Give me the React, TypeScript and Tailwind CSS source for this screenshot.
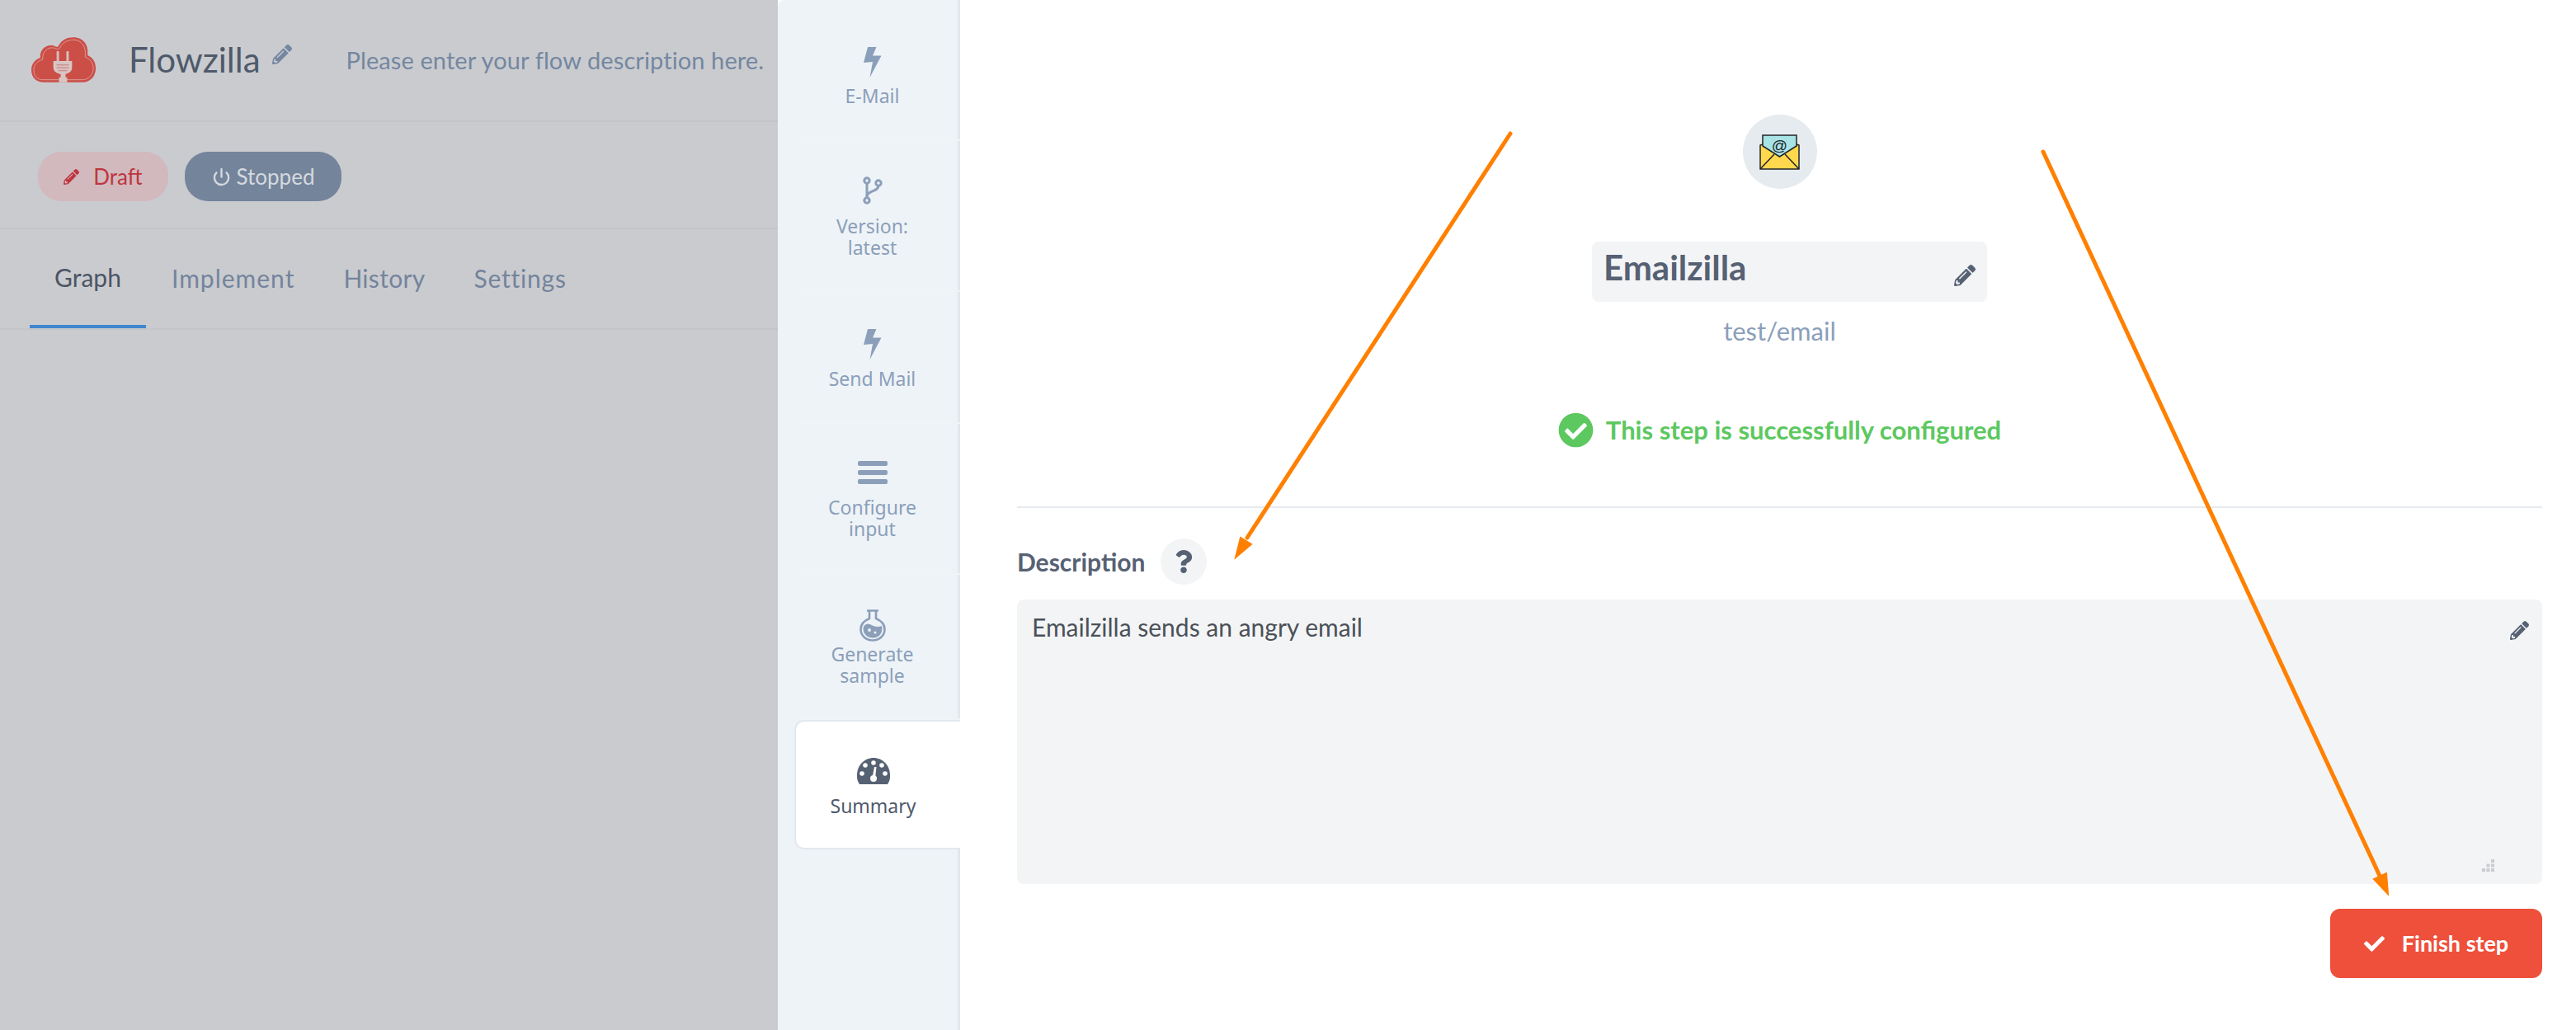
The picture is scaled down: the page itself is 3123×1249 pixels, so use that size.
import React from 'react'
import { FaPencilAlt, FaCheckCircle, FaCheck, FaQuestion } from 'react-icons/fa'
import { Power } from 'lucide-react'

function Logo() {
  return (
    <svg viewBox="0 0 80 56" className="w-[79px] h-[56px]">
      <path
        d="M14 55C5 55 0 48 0 40C0 32 5 27 11 25C10 15 18 8 27 10C31 12 32 12 33 11C37 3 44 0 52 0C63 0 71 9 69 22C76 25 79 31 79 38C79 48 72 55 63 55Z"
        fill="#cb4e47"
      />
      <path
        d="M14 52C7 52 3 47 3 40C3 33 8 29 14 27C13 18 20 11 28 13C32 15 33 15 35 13C38 6 45 3 52 3C61 3 68 11 66 24C73 27 76 32 76 38C76 46 70 52 63 52Z"
        fill="none"
        stroke="#dc9a95"
        strokeWidth="1"
      />
      <rect x="31" y="17" width="3" height="12" fill="#d9bdbb" />
      <rect x="43" y="17" width="3" height="12" fill="#d9bdbb" />
      <path d="M27 29H50V37C50 42 45 44 42 45V49H44V55H34V49H36V45C32 44 27 42 27 37Z" fill="#d9c5c3" />
      <rect x="31" y="33" width="15" height="1.5" fill="#cf8f8a" />
      <rect x="31" y="36.5" width="15" height="1.5" fill="#cf8f8a" />
      <rect x="33" y="40" width="11" height="1.5" fill="#cf8f8a" />
    </svg>
  )
}

function Bolt() {
  return (
    <svg viewBox="0 0 22 37" className="w-[22px] h-[37px]" fill="#8b9fba">
      <path d="M5 0H15.5L11 10.5H21.5L7.5 37L11 18L0 19Z" />
    </svg>
  )
}

function Fork() {
  return (
    <svg viewBox="0 0 24 34" className="w-[24px] h-[34px]" fill="none" stroke="#8b9fba" strokeWidth="3">
      <circle cx="5" cy="5" r="3.2" />
      <circle cx="19" cy="8" r="3.2" />
      <circle cx="5" cy="29" r="3.2" />
      <path d="M5 8V26" />
      <path d="M19 11C19 19 6 16 5 24" />
    </svg>
  )
}

function Menu() {
  return (
    <div className="flex flex-col gap-[5px] w-[36px]">
      <div className="h-[6px] rounded-[2px] bg-[#8b9fba]" />
      <div className="h-[6px] rounded-[2px] bg-[#8b9fba]" />
      <div className="h-[6px] rounded-[2px] bg-[#8b9fba]" />
    </div>
  )
}

function Flask() {
  return (
    <svg viewBox="0 0 32 39" className="w-[32px] h-[39px]">
      <path d="M9 1.5H23M12 2V11C5 14 1.5 18 1.5 24C1.5 32 8 37.5 16 37.5C24 37.5 30.5 32 30.5 24C30.5 18 27 14 20 11V2" fill="none" stroke="#8b9fba" strokeWidth="2.6" />
      <path d="M5 21C9 15 12 18 17 20C21 21.500 24 21 27 20C29 29 23 34.500 16 34.500C9 34.500 3 29 5 21Z" fill="#8b9fba" />
      <circle cx="12" cy="25" r="1.9" fill="#eef3f7" />
      <circle cx="19" cy="28" r="1.5" fill="#eef3f7" />
    </svg>
  )
}

function Gauge() {
  return (
    <svg viewBox="0 0 40 32" className="w-[40px] h-[32px]">
      <path d="M3 32C0 27 0 25 0 21C0 9 9 0 20 0C31 0 40 9 40 21C40 25 40 27 37 32Z" fill="#566173" />
      <g fill="#ffffff">
        <circle cx="20" cy="6" r="2.8" />
        <circle cx="10" cy="9" r="2.8" />
        <circle cx="30" cy="9" r="2.8" />
        <circle cx="6" cy="19" r="2.8" />
        <circle cx="34" cy="19" r="2.8" />
        <circle cx="20" cy="25" r="4" />
        <path d="M18.500 24L21 11H23.500L22 25Z" />
      </g>
    </svg>
  )
}

function Envelope() {
  return (
    <svg viewBox="0 0 49 43" className="w-[49px] h-[43px]">
      <path d="M1 12L24.500 2L48 12V42H1Z" fill="#ffd84d" />
      <path d="M4 1H45V14L24.500 27L4 14Z" fill="#a8e4e6" stroke="#22242a" strokeWidth="1.500" />
      <path d="M4 12L1 13V42H48V13L45 12M1 42L18 24M48 42L31 24" fill="none" stroke="#22242a" strokeWidth="1.500" />
      <text x="24.500" y="20" textAnchor="middle" fontSize="19" fontFamily="'Liberation Sans', sans-serif" fill="#22242a">@</text>
    </svg>
  )
}

function SideItem({ icon, label, className, iconClass, active }: { icon: React.ReactNode; label: React.ReactNode; className: string; iconClass: string; active?: boolean }) {
  return (
    <div className={`ml-[20px] -mr-[3px] pr-[12px] flex flex-col items-center text-center text-[23px] leading-[26px] font-['Noto_Sans',sans-serif] ${active ? 'relative bg-white text-[#4f5a6b] border-2 border-r-0 border-[#e3e8ee] rounded-l-xl' : 'text-[#8b9fba] border-b-2 border-[#f1f4f7]'} ${className}`}>
      <div className={iconClass}>{icon}</div>
      <div>{label}</div>
    </div>
  )
}

export default function App() {
  return (
    <div className="relative flex w-[3123px] h-[1249px] overflow-hidden bg-white font-['Lato',sans-serif]">
      {/* dimmed flow page */}
      <div className="w-[943px] shrink-0 bg-[#cacbcf]">
        <div className="h-[148px] border-b-2 border-[#c3c5c9] flex items-center pl-[38px]">
          <Logo />
          <span className="ml-[39px] -mt-[2px] text-[42px] text-[#4e5a6a]">Flowzilla</span>
          <FaPencilAlt className="ml-[14px] mb-[14px] text-[24px] text-[#7487a0]" />
          <span className="ml-[66px] -mt-[1px] text-[29px] tracking-[0.1px] text-[#7487a0]">Please enter your flow description here.</span>
        </div>
        <div className="h-[130px] border-b-2 border-[#c3c5c9] flex items-center pl-[46px] gap-[20px] pt-[4px]">
          <div className="w-[158px] h-[60px] rounded-[28px] bg-[#d1b9bd] text-[#c0353f] text-[26px] flex items-center justify-center gap-[17px]">
            <FaPencilAlt className="text-[19px]" />
            <span>Draft</span>
          </div>
          <div className="w-[190px] h-[60px] rounded-[28px] bg-[#74849b] text-[#d5d9de] text-[26px] flex items-center justify-center gap-[7px]">
            <Power size={23} strokeWidth={2.5} />
            <span>Stopped</span>
          </div>
        </div>
        <div className="h-[122px] border-b-2 border-[#c3c5c9] flex items-stretch pl-[36px] text-[30px] text-[#73849c]">
          <div className="w-[141px] flex items-center justify-center text-[#4b5565] border-b-4 border-[#3f86cf]">Graph</div>
          <div className="ml-[31px] pb-[2px] flex items-center tracking-[1px]">Implement</div>
          <div className="ml-[59px] pb-[2px] flex items-center tracking-[0.3px]">History</div>
          <div className="ml-[59px] pb-[2px] flex items-center tracking-[0.8px]">Settings</div>
        </div>
      </div>

      {/* step sidebar */}
      <div className="w-[221px] shrink-0 bg-[#eef3f7] border-r-[3px] border-[#e2e8ee] rounded-tl-lg">
        <SideItem icon={<Bolt />} label="E-Mail" className="h-[171px] pt-[57px]" iconClass="mb-[9px]" />
        <SideItem icon={<Fork />} label={<>Version:<br />latest</>} className="h-[183px] pt-[43px]" iconClass="mb-[13px]" />
        <SideItem icon={<Bolt />} label="Send Mail" className="h-[160px] pt-[45px]" iconClass="mb-[10px]" />
        <SideItem icon={<Menu />} label={<>Configure<br />input</>} className="h-[183px] pt-[45px]" iconClass="mb-[15px]" />
        <SideItem icon={<Flask />} label={<>Generate<br />sample</>} className="h-[176px] pt-[42px]" iconClass="mb-[2px]" />
        <SideItem active icon={<Gauge />} label="Summary" className="h-[157px] pt-[44px]" iconClass="mb-[13px]" />
      </div>

      {/* summary */}
      <div className="flex-1 flex flex-col items-center pl-[69px] pr-[41px] pt-[139px]">
        <div className="w-[90px] h-[90px] rounded-full bg-[#e6ebef] flex items-center justify-center">
          <Envelope />
        </div>
        <div className="mt-[64px] ml-[24px] w-[479px] h-[73px] rounded-lg bg-[#f3f4f6] flex items-center justify-between pl-[14px] pr-[14px]">
          <span className="text-[42px] font-bold text-[#566173] -mt-[10px]">Emailzilla</span>
          <FaPencilAlt className="text-[26px] text-[#566173] mt-[8px]" />
        </div>
        <div className="mt-[17px] text-[31px] leading-[36px] text-[#8b9fba]">test/email</div>
        <div className="mt-[81px] h-[42px] flex items-center gap-[15px]">
          <FaCheckCircle className="text-[43px] text-[#5cc85f]" />
          <span className="text-[31px] font-bold text-[#5cc85f]">This step is successfully configured</span>
        </div>
        <div className="mt-[72px] w-full border-b-2 border-[#e7eaee]" />
        <div className="mt-[37px] w-full h-[56px] flex items-center gap-[19px]">
          <span className="text-[30px] font-bold text-[#566173]">Description</span>
          <div className="w-[56px] h-[56px] rounded-full bg-[#f3f4f6] flex items-center justify-center">
            <FaQuestion className="text-[28px] text-[#566173]" />
          </div>
        </div>
        <div className="relative mt-[18px] w-full h-[345px] rounded-lg bg-[#f3f4f6] pl-[18px] pt-[14px] text-[30px] leading-[38px] text-[#4c5158]">
          Emailzilla sends an angry email
          <FaPencilAlt className="absolute right-[16px] top-[26px] text-[23px] text-[#566173]" />
          <svg viewBox="0 0 15 15" className="absolute right-[58px] bottom-[15px] w-[15px] h-[15px]" fill="#c9cbcf">
            <rect x="11" y="0" width="4" height="4" />
            <rect x="5.500" y="5.500" width="4" height="4" />
            <rect x="11" y="5.500" width="4" height="4" />
            <rect x="0" y="11" width="4" height="4" />
            <rect x="5.500" y="11" width="4" height="4" />
            <rect x="11" y="11" width="4" height="4" />
          </svg>
        </div>
        <div className="mt-[30px] self-end w-[257px] h-[84px] rounded-xl bg-[#ee503b] text-white flex items-center justify-center gap-[21px]">
          <FaCheck className="text-[25px]" />
          <span className="text-[27px] font-bold">Finish step</span>
        </div>
      </div>

      {/* annotation arrows */}
      <svg className="absolute inset-0 pointer-events-none" width="3123" height="1249" viewBox="0 0 3123 1249">
        <line x1="1831" y1="162" x2="1512" y2="652" stroke="#ff8000" strokeWidth="5" strokeLinecap="round" />
        <path d="M1498 676L1504 652L1517 660Z" fill="#ff8000" stroke="#ff8000" strokeWidth="2" />
        <line x1="2477" y1="184" x2="2885" y2="1062" stroke="#ff8000" strokeWidth="5" strokeLinecap="round" />
        <path d="M2895 1084L2878 1066L2893 1059Z" fill="#ff8000" stroke="#ff8000" strokeWidth="2" />
      </svg>
    </div>
  )
}
